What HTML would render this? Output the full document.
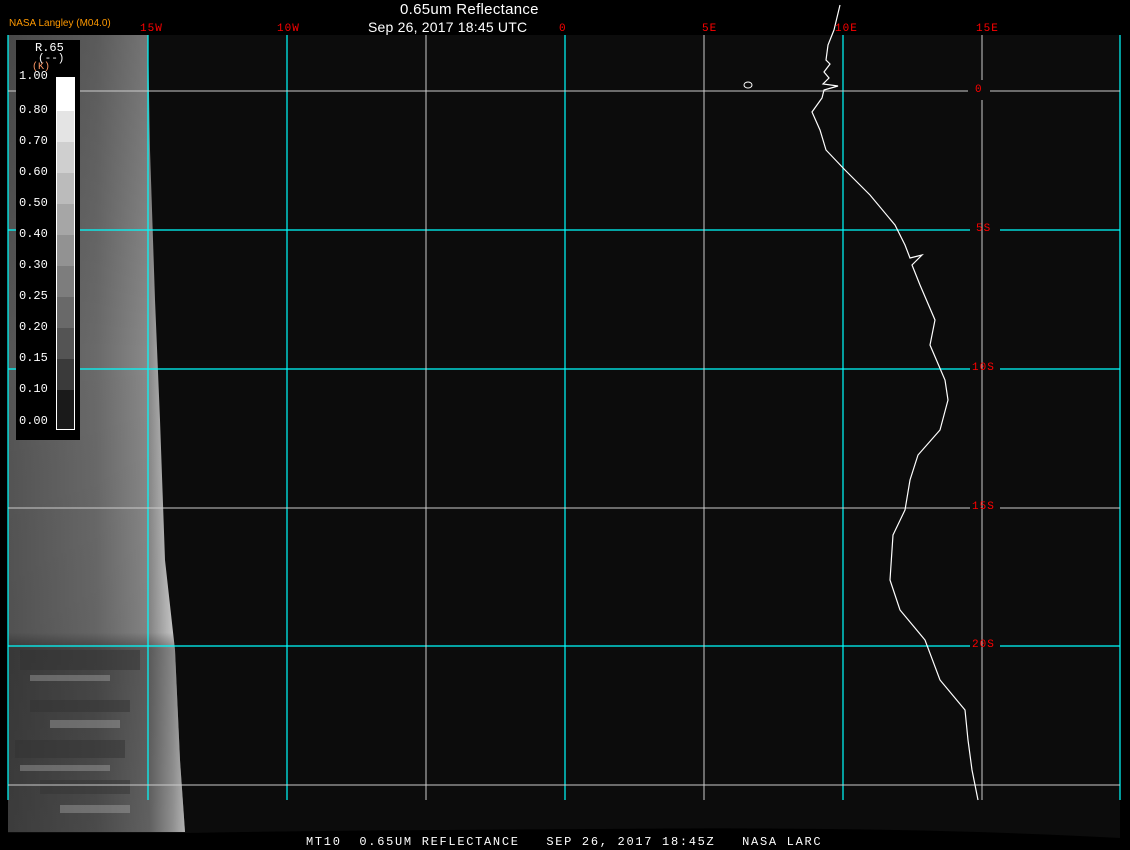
<!DOCTYPE html>
<html><head><meta charset="utf-8"><style>
html,body{margin:0;padding:0;background:#000;}
body{width:1130px;height:850px;position:relative;overflow:hidden;font-family:"Liberation Mono",monospace;}
.t{position:absolute;color:#fff;font-family:"Liberation Sans",sans-serif;font-size:15px;white-space:nowrap;}
.r{position:absolute;color:#f00;font-size:11px;white-space:nowrap;letter-spacing:1px;}
.lg{position:absolute;color:#fff;font-size:12px;left:19px;}
</style></head><body>
<svg width="1130" height="850" style="position:absolute;left:0;top:0">
<defs>
<linearGradient id="cl" x1="0" x2="1">
<stop offset="0" stop-color="#555"/><stop offset=".5" stop-color="#6a6a6a"/><stop offset=".8" stop-color="#8a8a8a"/><stop offset=".93" stop-color="#ccc"/><stop offset="1" stop-color="#fff"/>
</linearGradient>
<linearGradient id="cv" x1="0" y1="0" x2="0" y2="1">
<stop offset="0" stop-color="#000" stop-opacity=".15"/><stop offset=".4" stop-color="#000" stop-opacity="0"/><stop offset=".75" stop-color="#000" stop-opacity=".05"/><stop offset=".77" stop-color="#000" stop-opacity=".35"/><stop offset="1" stop-color="#000" stop-opacity=".3"/>
</linearGradient>
</defs>
<path d="M8 35 L1120 35 L1120 838 Q900 826 600 829 Q350 830 185 833 L8 833 Z" fill="#0c0c0c"/>
<path d="M8 35 L148 35 L150 150 L155 300 L160 420 L165 560 L175 650 L180 760 L185 832 L8 832 Z" fill="url(#cl)"/>
<path d="M8 35 L148 35 L150 150 L155 300 L160 420 L165 560 L175 650 L180 760 L185 832 L8 832 Z" fill="url(#cv)"/>
<g fill="#333" opacity=".5"><rect x="20" y="650" width="120" height="20"/><rect x="30" y="700" width="100" height="12"/><rect x="15" y="740" width="110" height="18"/><rect x="40" y="780" width="90" height="14"/></g>
<g fill="#bbb" opacity=".35"><rect x="30" y="675" width="80" height="6"/><rect x="50" y="720" width="70" height="8"/><rect x="20" y="765" width="90" height="6"/><rect x="60" y="805" width="70" height="8"/></g>
<g stroke="#0ff" stroke-width="1.2">
<line x1="148" y1="35" x2="148" y2="800"/><line x1="287" y1="35" x2="287" y2="800"/><line x1="565" y1="35" x2="565" y2="800"/><line x1="843" y1="35" x2="843" y2="800"/><line x1="1120" y1="35" x2="1120" y2="800"/>
<line x1="8" y1="230" x2="970" y2="230"/><line x1="1000" y1="230" x2="1120" y2="230"/>
<line x1="8" y1="369" x2="970" y2="369"/><line x1="1000" y1="369" x2="1120" y2="369"/>
<line x1="8" y1="646" x2="970" y2="646"/><line x1="1000" y1="646" x2="1120" y2="646"/>
<line x1="8" y1="35" x2="8" y2="800"/>
</g>
<g stroke="#ccc" stroke-width="1">
<line x1="426" y1="35" x2="426" y2="800"/><line x1="704" y1="35" x2="704" y2="800"/><line x1="982" y1="35" x2="982" y2="80"/><line x1="982" y1="100" x2="982" y2="800"/>
<line x1="8" y1="91" x2="968" y2="91"/><line x1="990" y1="91" x2="1120" y2="91"/>
<line x1="8" y1="508" x2="970" y2="508"/><line x1="1000" y1="508" x2="1120" y2="508"/>
<line x1="8" y1="785" x2="1120" y2="785"/>
</g>
<polyline fill="none" stroke="#fff" stroke-width="1.2" points="840,5 834,30 828,45 826,60 830,64 824,72 829,78 823,84 838,86 824,90 822,98 812,112 820,130 826,150 845,170 870,195 895,225 905,245 910,258 922,255 912,265 920,285 935,320 930,345 945,380 948,400 940,430 918,455 910,480 905,510 893,535 890,580 900,610 925,640 940,680 965,710 968,740 972,770 975,785 978,800"/>
<ellipse cx="748" cy="85" rx="4" ry="3" fill="none" stroke="#fff"/>
<rect x="16" y="40" width="64" height="400" fill="#000"/>
<g>
<rect x="56" y="77" width="19" height="34" fill="#fff"/><rect x="56" y="111" width="19" height="31" fill="#e4e4e4"/><rect x="56" y="142" width="19" height="31" fill="#cfcfcf"/><rect x="56" y="173" width="19" height="31" fill="#bbb"/><rect x="56" y="204" width="19" height="31" fill="#a6a6a6"/><rect x="56" y="235" width="19" height="31" fill="#929292"/><rect x="56" y="266" width="19" height="31" fill="#7d7d7d"/><rect x="56" y="297" width="19" height="31" fill="#696969"/><rect x="56" y="328" width="19" height="31" fill="#545454"/><rect x="56" y="359" width="19" height="31" fill="#3a3a3a"/><rect x="56" y="390" width="19" height="40" fill="#1a1a1a"/>
<rect x="56.5" y="77.5" width="18" height="352" fill="none" stroke="#fff"/>
</g>
</svg>
<div class="t" style="left:400px;top:1px;letter-spacing:.3px">0.65um Reflectance</div>
<div class="t" style="left:368px;top:19px;font-size:14px;letter-spacing:.2px">Sep 26, 2017 18:45 UTC</div>
<div style="position:absolute;left:9px;top:18px;color:#f90;font-family:'Liberation Sans',sans-serif;font-size:10px">NASA Langley (M04.0)</div>
<div class="r" style="left:140px;top:23px">15W</div>
<div class="r" style="left:277px;top:23px">10W</div>
<div class="r" style="left:559px;top:23px">0</div>
<div class="r" style="left:702px;top:23px">5E</div>
<div class="r" style="left:835px;top:23px">10E</div>
<div class="r" style="left:976px;top:23px">15E</div>
<div class="r" style="left:975px;top:84px">0</div>
<div class="r" style="left:976px;top:223px">5S</div>
<div class="r" style="left:972px;top:362px">10S</div>
<div class="r" style="left:972px;top:501px">15S</div>
<div class="r" style="left:972px;top:639px">20S</div>
<div class="lg" style="left:35px;top:41px">R.65</div>
<div class="lg" style="left:38px;top:53px;font-size:11px">(--)</div>
<div class="lg" style="left:32px;top:62px;font-size:10px;color:#f96">(K)</div>
<div class="lg" style="top:69px">1.00</div><div class="lg" style="top:103px">0.80</div><div class="lg" style="top:134px">0.70</div><div class="lg" style="top:165px">0.60</div><div class="lg" style="top:196px">0.50</div><div class="lg" style="top:227px">0.40</div><div class="lg" style="top:258px">0.30</div><div class="lg" style="top:289px">0.25</div><div class="lg" style="top:320px">0.20</div><div class="lg" style="top:351px">0.15</div><div class="lg" style="top:382px">0.10</div><div class="lg" style="top:414px">0.00</div>
<div style="position:absolute;left:306px;top:835px;color:#fff;font-size:12px;white-space:pre;letter-spacing:1.7px">MT10  0.65UM REFLECTANCE   SEP 26, 2017 18:45Z   NASA LARC</div>
</body></html>
